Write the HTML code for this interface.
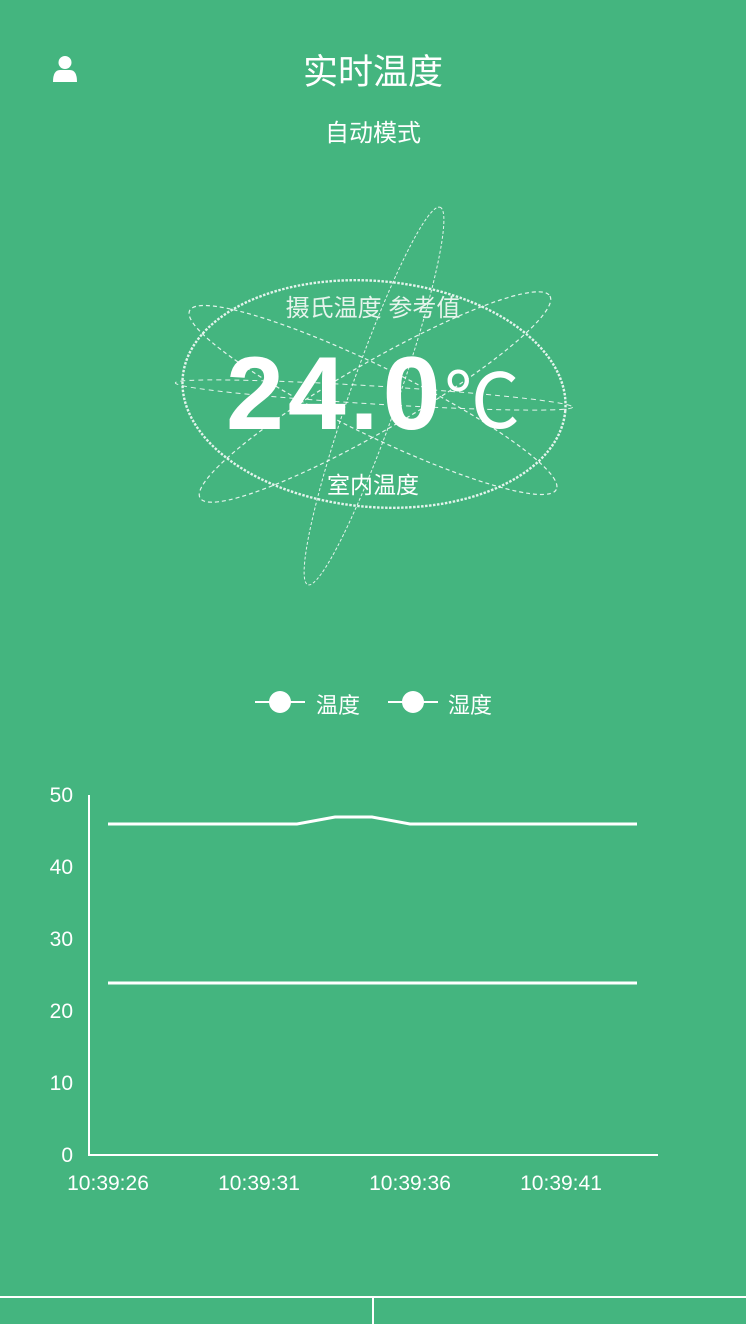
<!DOCTYPE html>
<html><head><meta charset="utf-8"><style>
html,body{margin:0;padding:0}
body{width:746px;height:1324px;background:#44b57f;position:relative;overflow:hidden;font-family:"Liberation Sans","Noto Sans CJK SC",sans-serif;color:#fff}
.a{position:absolute}
</style></head><body>
<svg class="a" style="left:52px;top:55px" width="26" height="28" viewBox="0 0 26 28"><circle cx="13" cy="7.5" r="6.5" fill="#fff"/><path d="M1 27 Q1 15 8 15 L18 15 Q25 15 25 27 Z" fill="#fff"/></svg>
<div class="a" style="left:0;width:746px;top:44px;text-align:center;font-size:35px">实时温度</div>
<div class="a" style="left:0;width:746px;top:113px;text-align:center;font-size:24px">自动模式</div>
<svg class="a" style="left:0;top:0" width="746" height="1324">
<g fill="none" stroke="#fff" stroke-opacity="0.85">
<ellipse cx="374" cy="394" rx="192" ry="113" transform="rotate(5 374 394)" stroke-width="2.4" stroke-dasharray="2.5 1.5"/>
<ellipse cx="374" cy="396" rx="200" ry="24" transform="rotate(-70.7 374 396)" stroke-width="1" stroke-dasharray="3 2"/>
<ellipse cx="373" cy="400" rx="204" ry="34" transform="rotate(26 373 400)" stroke-width="1.2" stroke-dasharray="4 3"/>
<ellipse cx="375" cy="397" rx="202" ry="34" transform="rotate(-30 375 397)" stroke-width="1.2" stroke-dasharray="4 3"/>
<ellipse cx="374" cy="395" rx="199" ry="9" transform="rotate(3.5 374 395)" stroke-width="1" stroke-dasharray="5 4"/>
</g>
<g stroke="#fff" stroke-width="2" fill="none">
<line x1="89" y1="795" x2="89" y2="1156"/>
<line x1="88" y1="1155" x2="658" y2="1155"/>
<polyline stroke-width="3" points="108,824 297,824 335,817 372,817 410,824 637,824"/>
<line stroke-width="3" x1="108" y1="983" x2="637" y2="983"/>
<line x1="255" y1="702" x2="305" y2="702"/><circle cx="280" cy="702" r="11" fill="#fff" stroke="none"/>
<line x1="388" y1="702" x2="438" y2="702"/><circle cx="413" cy="702" r="11" fill="#fff" stroke="none"/>
<line x1="0" y1="1297" x2="746" y2="1297"/>
<line x1="373" y1="1297" x2="373" y2="1324"/>
</g>
<g fill="#fff" font-size="21" font-family="Liberation Sans, sans-serif">
<text x="73" y="802" text-anchor="end">50</text>
<text x="73" y="874" text-anchor="end">40</text>
<text x="73" y="946" text-anchor="end">30</text>
<text x="73" y="1018" text-anchor="end">20</text>
<text x="73" y="1090" text-anchor="end">10</text>
<text x="73" y="1162" text-anchor="end">0</text>
<text x="108" y="1190" text-anchor="middle">10:39:26</text>
<text x="259" y="1190" text-anchor="middle">10:39:31</text>
<text x="410" y="1190" text-anchor="middle">10:39:36</text>
<text x="561" y="1190" text-anchor="middle">10:39:41</text>
</g>
</svg>
<div class="a" style="left:316px;top:688px;font-size:22px">温度</div>
<div class="a" style="left:448px;top:688px;font-size:22px">湿度</div>
<div class="a" style="left:0;width:746px;top:288px;text-align:center;font-size:24px;color:#e6f4ec">摄氏温度 参考值</div>
<div class="a" style="left:226px;top:334px;font-size:104px;font-weight:bold;font-family:'Liberation Sans',sans-serif;line-height:120px;letter-spacing:4px">24.0</div>
<div class="a" style="left:444px;top:350px;font-size:76px;font-family:'Noto Sans CJK SC',sans-serif;line-height:90px">℃</div>
<div class="a" style="left:0;width:746px;top:466px;text-align:center;font-size:23px">室内温度</div>
</body></html>
